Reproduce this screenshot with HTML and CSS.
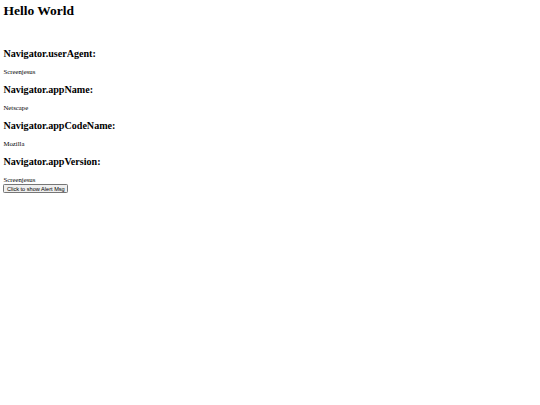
FILE: index.html
```html
<!DOCTYPE html>
<html>
<head>
<meta charset="utf-8">
<title>Navigator</title>
<link rel="stylesheet" href="styles.css">
</head>
<body class="page">
<h1 class="title">Hello World</h1>
<h2 class="label">Navigator.userAgent:</h2>
<p class="value">Screenjesus</p>
<h2 class="label">Navigator.appName:</h2>
<p class="value">Netscape</p>
<h2 class="label">Navigator.appCodeName:</h2>
<p class="value">Mozilla</p>
<h2 class="label">Navigator.appVersion:</h2>
<p class="value last">Screenjesus<br><button class="alert-btn" type="button">Click to show Alert Msg</button></p>
</body>
</html>
```
FILE: styles.css
```css
html, body {
  background: #ffffff;
}
.page {
  margin: 3.4px;
  font-family: "Liberation Serif", "Times New Roman", serif;
  color: #000000;
}
.title {
  font-size: 13.5px;
  font-weight: bold;
  margin: 0 0 29px 0;
  line-height: 15.5px;
}
.label {
  font-size: 10.1px;
  font-weight: bold;
  margin: 8.4px 0;
  line-height: 11.6px;
}
.value {
  font-size: 6.75px;
  line-height: 7.8px;
  margin: 6.75px 0;
}
.value.last {
  margin-bottom: 0;
}
.alert-btn {
  font-family: "Liberation Sans", Arial, sans-serif;
  font-size: 5.6px;
  line-height: 6.4px;
  padding: 0.4px 2.5px;
  margin: 0;
  background: #efefef;
  color: #000000;
  border: 1px solid #767676;
  border-radius: 1.3px;
  vertical-align: top;
}
```
